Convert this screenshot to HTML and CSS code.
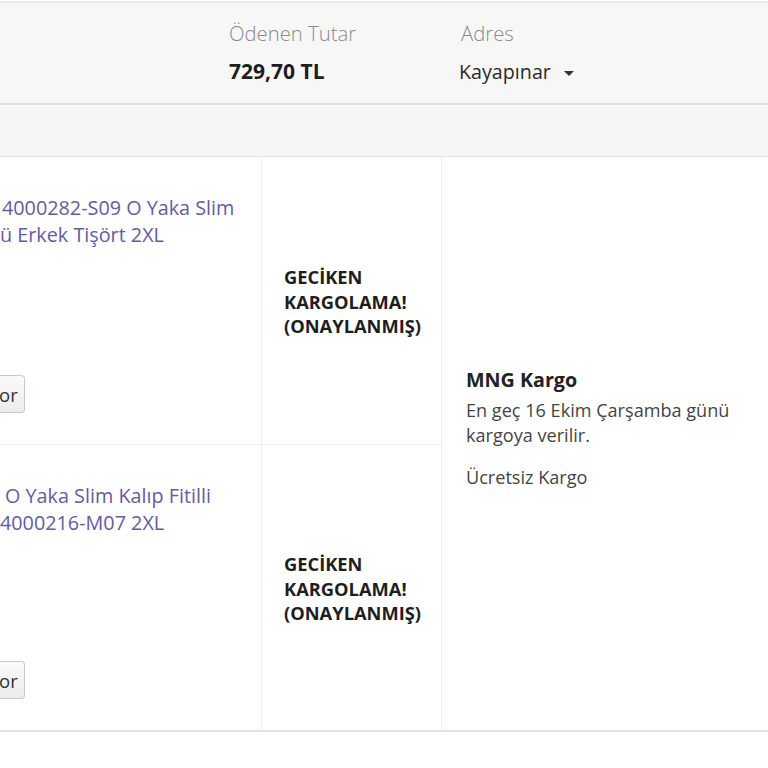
FILE: index.html
```html
<!DOCTYPE html>
<html lang="tr">
<head>
    <meta charset="UTF-8">
    <meta name="viewport" content="width=device-width, initial-scale=1.0">
    <title>Siparişlerim</title>
    <link rel="stylesheet" href="styles.css">
</head>
<body>
    <div class="order">
        <div class="order-header">
            <div class="info-item paid">
                <span class="info-label">Ödenen Tutar</span>
                <span class="info-value total">729,70 TL</span>
            </div>
            <div class="info-item address">
                <span class="info-label">Adres</span>
                <span class="info-value">Kayapınar <span class="caret"></span></span>
            </div>
        </div>
        <div class="order-band"></div>

        <div class="order-table">
            <div class="cell product first">
                <a class="product-name first-indent" href="#">4000282-S09 O Yaka Slim<br>ü Erkek Tişört 2XL</a>
                <button type="button" class="ask-btn">or</button>
            </div>
            <div class="cell status first">
                <strong>GECİKEN<br>KARGOLAMA!<br>(ONAYLANMIŞ)</strong>
            </div>
            <div class="cell cargo">
                <div class="cargo-info">
                    <strong class="cargo-name">MNG Kargo</strong>
                    <p>En geç 16 Ekim Çarşamba günü kargoya verilir.</p>
                    <p class="free">Ücretsiz Kargo</p>
                </div>
            </div>

            <div class="cell product">
                <a class="product-name second-indent" href="#">O Yaka Slim Kalıp Fitilli<br>4000216-M07 2XL</a>
                <button type="button" class="ask-btn">or</button>
            </div>
            <div class="cell status">
                <strong>GECİKEN<br>KARGOLAMA!<br>(ONAYLANMIŞ)</strong>
            </div>
        </div>
    </div>
</body>
</html>
```

FILE: styles.css
```css
body {
    margin: 0;
    background-color: #fff;
    font-family: "Open Sans", Arial, sans-serif;
    color: #333;
    overflow: hidden;
}

.order {
    padding-top: 1px;
}

.order-header {
    display: flex;
    height: 100px;
    padding-left: 229px;
    background-color: #f7f7f7;
    border-top: 2px solid #ebebeb;
    border-bottom: 2px solid #e2e2e2;
}

.info-item {
    display: flex;
    flex-direction: column;
    gap: 11px;
    padding-top: 17px;
    font-size: 20.3px;
    line-height: 27px;
}

.info-item.paid {
    width: 230px;
}

.info-label {
    color: #8a8a8a;
    font-weight: 300;
}

.address .info-label {
    padding-left: 2px;
}

.info-value {
    color: #2a2a2a;
    font-size: 19.7px;
}

.info-value.total {
    font-size: 21px;
    font-weight: 700;
    color: #1e1e1e;
}

.caret {
    display: inline-block;
    width: 0;
    height: 0;
    margin-left: 8px;
    vertical-align: middle;
    border-left: 5px solid transparent;
    border-right: 5px solid transparent;
    border-top: 5px solid #333;
}

.order-band {
    height: 50px;
    background-color: #f6f6f6;
    border-top: 1px solid #fbfbfb;
    border-bottom: 1px solid #e6e6e6;
}

.order-table {
    display: grid;
    grid-template-columns: 262px 180px 1fr;
    grid-template-rows: 288px 285px;
    border-bottom: 2px solid #e2e2e2;
}

.cell {
    box-sizing: border-box;
    border-right: 1px solid #eeeeee;
}

.cell.first {
    border-bottom: 1px solid #eeeeee;
}

.product {
    display: flex;
    flex-direction: column;
    justify-content: space-between;
    align-items: flex-start;
    padding: 37px 0 31px 0;
    overflow: hidden;
}

.product-name {
    color: #665b9e;
    text-decoration: none;
    font-size: 19.8px;
    line-height: 27px;
    white-space: nowrap;
}

.first-indent {
    text-indent: 2px;
}

.second-indent {
    text-indent: 5px;
}

.ask-btn {
    height: 38px;
    padding: 0 6px 0 0;
    margin-left: -1px;
    font-family: inherit;
    font-size: 18.5px;
    color: #333;
    background: linear-gradient(#fafafa, #ececec);
    border: 1px solid #c9c9c9;
    border-left: none;
    border-radius: 0 4px 4px 0;
}

.status {
    display: flex;
    align-items: center;
    padding: 3px 0 0 22px;
    font-size: 18.3px;
    line-height: 24.5px;
    color: #1e1e1e;
}

.cargo {
    grid-column: 3;
    grid-row: 1 / span 2;
    display: flex;
    align-items: center;
    padding: 0 0 30px 24px;
    border-right: none;
}

.cargo-info {
    font-size: 18.1px;
    line-height: 25px;
    color: #444;
}

.cargo-name {
    display: block;
    font-size: 19.7px;
    line-height: 26px;
    color: #222;
    margin-bottom: 5px;
}

.cargo-info p {
    margin: 0;
    width: 280px;
}

.cargo-info .free {
    margin-top: 17px;
}
```
